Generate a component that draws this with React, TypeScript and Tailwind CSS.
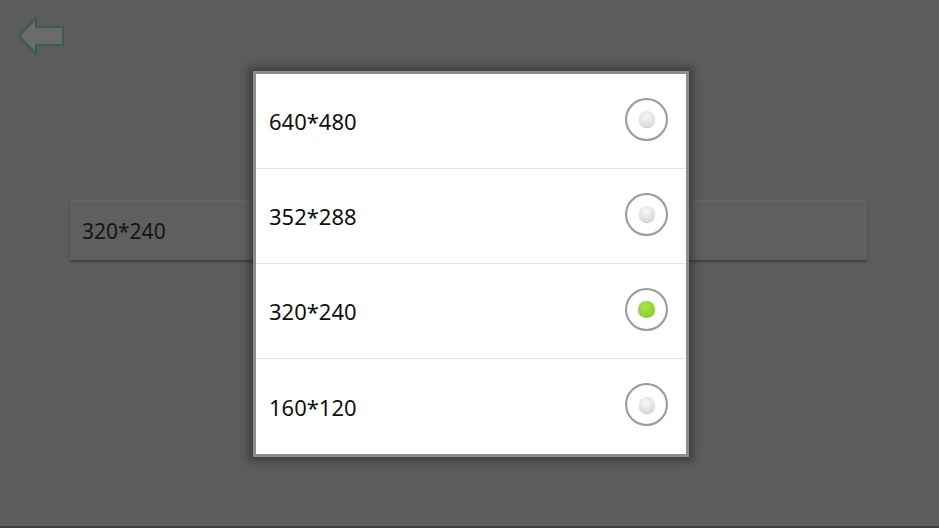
import React from "react";

const options = [
  { label: "640*480", selected: false },
  { label: "352*288", selected: false },
  { label: "320*240", selected: true },
  { label: "160*120", selected: false },
];

function Radio({ selected }: { selected: boolean }) {
  return (
    <div className="mb-[4px] w-[43px] h-[43px] rounded-full border-2 border-[#9b9b9b] bg-white flex items-center justify-center shadow-[inset_0_0_1px_rgba(0,0,0,0.25)]">
      {selected ? (
        <div className="w-[17px] h-[17px] rounded-full bg-[radial-gradient(circle_at_45%_35%,#a6e64a,#7cc91e)] shadow-[0_0_1px_rgba(0,0,0,0.4)]" />
      ) : (
        <div className="w-[16px] h-[16px] rounded-full bg-[radial-gradient(circle_at_45%_35%,#f8f8f8,#cfcfcf)] shadow-[0_1px_1px_rgba(0,0,0,0.25)]" />
      )}
    </div>
  );
}

export default function App() {
  return (
    <div
      className="relative w-[939px] h-[528px] bg-[#5c5c5c] overflow-hidden border-b-2 border-[#3e3e3e] flex flex-col"
      style={{ fontFamily: '"Noto Sans", "Open Sans", sans-serif' }}
    >
      <div className="pl-[16px] pt-[15px] h-[200px]">
        <svg width="50" height="44" viewBox="0 0 50 44">
          <path
            d="M3 21 L20 3 L20 12 L47 12 L47 30 L20 30 L20 39 Z"
            fill="#6b6b6b"
            stroke="#3c5a5a"
            strokeWidth="2"
            strokeLinejoin="round"
          />
        </svg>
      </div>
      <div className="ml-[70px] w-[797px] h-[60px] bg-[#5f5f5f] border-t border-[#666] shadow-[0_2px_2px_rgba(0,0,0,0.3)] flex items-center pl-[12px] pt-[3px] text-[21px] text-[#151515]">
        320*240
      </div>

      <div className="absolute left-[253px] top-[71px] w-[436px] border-[3px] border-[#8c8c8c] bg-white shadow-[0_0_8px_4px_rgba(0,0,0,0.35)] flex flex-col">
        {options.map((o, i) => (
          <div
            key={o.label}
            className={`h-[95px] flex items-center justify-between pl-[13px] pr-[18px] ${
              i < options.length - 1 ? "border-b border-[#e4e4e4]" : ""
            }`}
          >
            <span className="text-[22px] text-[#111] leading-none">{o.label}</span>
            <Radio selected={o.selected} />
          </div>
        ))}
      </div>
    </div>
  );
}
